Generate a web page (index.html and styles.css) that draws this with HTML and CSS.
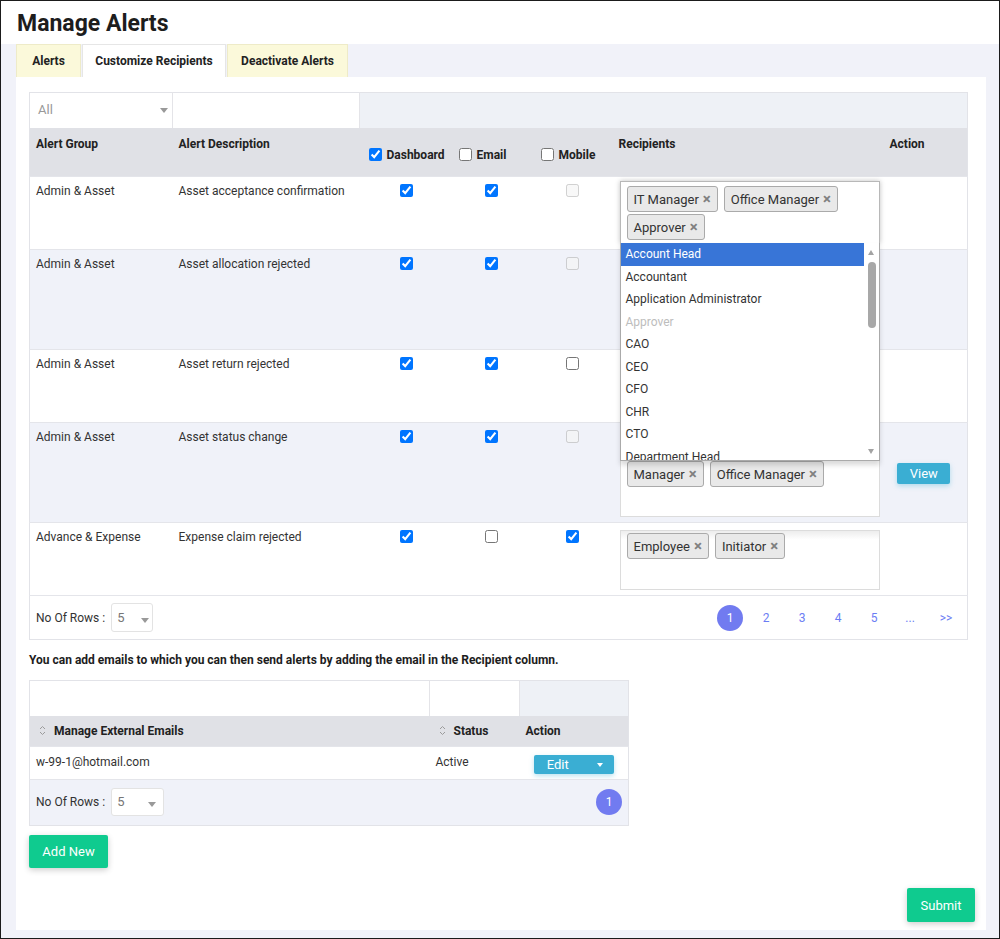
FILE: index.html
```html
<!DOCTYPE html>
<html lang="en">
<head>
    <meta charset="UTF-8">
    <meta name="viewport" content="width=device-width, initial-scale=1.0">
    <title>Manage Alerts</title>
    <link rel="stylesheet" href="styles.css">
</head>
<body>
<div class="page">
    <h1 class="title">Manage Alerts</h1>
    <ul class="tabs">
        <li class="tab t1">Alerts</li>
        <li class="tab t2 active">Customize Recipients</li>
        <li class="tab t3">Deactivate Alerts</li>
    </ul>

    <div class="panel">
        <table class="grid alerts">
            <colgroup>
                <col style="width:143px"><col style="width:187px"><col style="width:93px"><col style="width:78px">
                <col style="width:83px"><col style="width:271px"><col style="width:83px">
            </colgroup>
            <thead>
                <tr class="filter-row">
                    <td class="filter-cell"><div class="fake-select">All<span class="caret"></span></div></td>
                    <td class="filter-cell"></td>
                    <td class="filter-empty" colspan="5"></td>
                </tr>
                <tr class="head-row">
                    <th>Alert Group</th>
                    <th>Alert Description</th>
                    <th class="th-check th-dash"><label><input type="checkbox" checked>Dashboard</label></th>
                    <th class="th-check th-mail"><label><input type="checkbox">Email</label></th>
                    <th class="th-check th-mob"><label><input type="checkbox">Mobile</label></th>
                    <th class="th-rcpt">Recipients</th>
                    <th class="th-act">Action</th>
                </tr>
            </thead>
            <tbody>
                <tr>
                    <td>Admin &amp; Asset</td>
                    <td>Asset acceptance confirmation</td>
                    <td class="chk"><input type="checkbox" checked></td>
                    <td class="chk"><input type="checkbox" checked></td>
                    <td class="chk"><input type="checkbox" disabled></td>
                    <td class="rcpt-cell">
                        <div class="rcpt open">
                            <span class="tag">IT Manager<i class="x">×</i></span>
                            <span class="tag">Office Manager<i class="x">×</i></span>
                            <span class="tag">Approver<i class="x">×</i></span>
                            <span class="rcpt-input inline"></span>
                            <div class="dropdown">
                                <ul class="dd-list">
                                    <li class="hl">Account Head</li>
                                    <li>Accountant</li>
                                    <li>Application Administrator</li>
                                    <li class="off">Approver</li>
                                    <li>CAO</li>
                                    <li>CEO</li>
                                    <li>CFO</li>
                                    <li>CHR</li>
                                    <li>CTO</li>
                                    <li>Department Head</li>
                                    <li>Employee</li>
                                </ul>
                                <div class="dd-scroll">
                                    <span class="arr up"></span>
                                    <span class="thumb"></span>
                                    <span class="arr down"></span>
                                </div>
                            </div>
                        </div>
                    </td>
                    <td class="act"></td>
                </tr>
                <tr class="alt">
                    <td>Admin &amp; Asset</td>
                    <td>Asset allocation rejected</td>
                    <td class="chk"><input type="checkbox" checked></td>
                    <td class="chk"><input type="checkbox" checked></td>
                    <td class="chk"><input type="checkbox" disabled></td>
                    <td class="rcpt-cell">
                        <div class="rcpt">
                            <span class="tag">Department Head<i class="x">×</i></span>
                            <span class="tag">HR Manager<i class="x">×</i></span>
                            <span class="tag">Initiator<i class="x">×</i></span>
                            <span class="rcpt-input"></span>
                        </div>
                    </td>
                    <td class="act"></td>
                </tr>
                <tr>
                    <td>Admin &amp; Asset</td>
                    <td>Asset return rejected</td>
                    <td class="chk"><input type="checkbox" checked></td>
                    <td class="chk"><input type="checkbox" checked></td>
                    <td class="chk"><input type="checkbox"></td>
                    <td class="rcpt-cell">
                        <div class="rcpt one">
                            <span class="tag">Initiator<i class="x">×</i></span>
                            <span class="rcpt-input"></span>
                        </div>
                    </td>
                    <td class="act"></td>
                </tr>
                <tr class="alt">
                    <td>Admin &amp; Asset</td>
                    <td>Asset status change</td>
                    <td class="chk"><input type="checkbox" checked></td>
                    <td class="chk"><input type="checkbox" checked></td>
                    <td class="chk"><input type="checkbox" disabled></td>
                    <td class="rcpt-cell">
                        <div class="rcpt">
                            <span class="tag">Department Head<i class="x">×</i></span>
                            <span class="tag">HR Manager<i class="x">×</i></span>
                            <span class="tag">Manager<i class="x">×</i></span>
                            <span class="tag">Office Manager<i class="x">×</i></span>
                            <span class="rcpt-input"></span>
                        </div>
                    </td>
                    <td class="act"><button class="btn-view">View</button></td>
                </tr>
                <tr>
                    <td>Advance &amp; Expense</td>
                    <td>Expense claim rejected</td>
                    <td class="chk"><input type="checkbox" checked></td>
                    <td class="chk"><input type="checkbox"></td>
                    <td class="chk"><input type="checkbox" checked></td>
                    <td class="rcpt-cell">
                        <div class="rcpt one">
                            <span class="tag">Employee<i class="x">×</i></span>
                            <span class="tag">Initiator<i class="x">×</i></span>
                            <span class="rcpt-input"></span>
                        </div>
                    </td>
                    <td class="act"></td>
                </tr>
            </tbody>
            <tfoot>
                <tr class="foot-row">
                    <td colspan="7">
                        <div class="foot-bar">
                            <span class="rows-label">No Of Rows :</span>
                            <div class="fake-select small">5<span class="caret"></span></div>
                            <ul class="pager">
                                <li class="cur">1</li>
                                <li>2</li>
                                <li>3</li>
                                <li>4</li>
                                <li>5</li>
                                <li>...</li>
                                <li>&gt;&gt;</li>
                            </ul>
                        </div>
                    </td>
                </tr>
            </tfoot>
        </table>

        <p class="note">You can add emails to which you can then send alerts by adding the email in the Recipient column.</p>

        <table class="grid emails">
            <colgroup>
                <col style="width:400px"><col style="width:90px"><col style="width:109px">
            </colgroup>
            <thead>
                <tr class="filter-row">
                    <td class="filter-cell"></td>
                    <td class="filter-cell"></td>
                    <td class="filter-empty"></td>
                </tr>
                <tr class="head-row">
                    <th class="sortable"><svg class="sort" width="7" height="11" viewBox="0 0 7 11"><path d="M1 4L3.5 1.5L6 4M1 7L3.5 9.5L6 7" fill="none" stroke="#9b9b9b" stroke-width="1"/></svg>Manage External Emails</th>
                    <th class="sortable"><svg class="sort" width="7" height="11" viewBox="0 0 7 11"><path d="M1 4L3.5 1.5L6 4M1 7L3.5 9.5L6 7" fill="none" stroke="#9b9b9b" stroke-width="1"/></svg>Status</th>
                    <th>Action</th>
                </tr>
            </thead>
            <tbody>
                <tr>
                    <td>w-99-1@hotmail.com</td>
                    <td class="status">Active</td>
                    <td class="act"><button class="btn-edit"><span>Edit</span><span class="edit-caret"></span></button></td>
                </tr>
            </tbody>
            <tfoot>
                <tr class="foot-row alt-foot">
                    <td colspan="3">
                        <div class="foot-bar">
                            <span class="rows-label">No Of Rows :</span>
                            <div class="fake-select wide">5<span class="caret"></span></div>
                            <ul class="pager">
                                <li class="cur">1</li>
                            </ul>
                        </div>
                    </td>
                </tr>
            </tfoot>
        </table>

        <button class="btn-green add">Add New</button>

        <div class="submit-row">
            <button class="btn-green">Submit</button>
        </div>
    </div>
</div>
</body>
</html>
```

FILE: styles.css
```css
* {
    box-sizing: border-box;
}
body {
    margin: 0;
    font-family: Roboto, "Liberation Sans", Arial, sans-serif;
    color: #333;
    background: #fff;
}
.page {
    width: 1000px;
    height: 939px;
    border: 1px solid #1b1b1b;
    background: #f1f2f9;
    overflow: hidden;
}
.title {
    margin: 0;
    padding: 10px 16px 0;
    height: 43px;
    background: #fff;
    font-size: 23px;
    line-height: 26px;
    font-weight: 700;
    color: #1d1d1d;
}
.tabs {
    list-style: none;
    margin: 0;
    padding: 0 0 0 15px;
    display: flex;
    height: 33px;
}
.tab {
    height: 33px;
    margin-right: 1px;
    background: #fbf9da;
    border: 1px solid #eeebc8;
    border-bottom: none;
    font-size: 12px;
    font-weight: 700;
    color: #222;
    text-align: center;
    line-height: 32px;
}
.t1 { width: 65px; }
.t2 { width: 144px; }
.t3 { width: 121px; }
.tab.active {
    background: #fff;
    border-color: #e6e6e6;
}

/* main white panel */
.panel {
    display: flex;
    flex-direction: column;
    align-items: flex-start;
    margin-left: 15px;
    width: 970px;
    height: 853px;
    background: #fff;
    padding: 15px 18px 8px 13px;
}

.grid {
    flex: none;
    border-collapse: collapse;
    table-layout: fixed;
    font-size: 12px;
    border: 1px solid #e2e3e8;
}
.alerts { width: 938px; }
.emails { width: 599px; }

.grid td, .grid th {
    padding: 7px 6px 5px;
    vertical-align: top;
    text-align: left;
    line-height: 14px;
}
.grid tbody td {
    border-top: 1px solid #e4e5ea;
}
.grid tbody tr.alt td {
    background: #f0f2f9;
}

.filter-row td {
    height: 35px;
    padding: 0;
    vertical-align: middle;
}
.filter-cell {
    background: #fff;
    border-right: 1px solid #e4e4e8;
}
.filter-empty {
    background: #eef1f6;
}
.fake-select {
    position: relative;
    color: #999;
    font-size: 13px;
    padding-left: 8px;
}
.caret {
    position: absolute;
    width: 0;
    height: 0;
    border-left: 4px solid transparent;
    border-right: 4px solid transparent;
    border-top: 5px solid #999;
    top: 50%;
    margin-top: -2px;
}
.filter-row .caret {
    right: 4px;
}

.head-row th {
    background: #e0e1e6;
    font-weight: 700;
    color: #222;
    padding-top: 9px;
    height: 49px;
}
.th-check {
    padding-top: 20px !important;
}
.th-check label {
    display: flex;
    align-items: center;
    gap: 5px;
}
.th-check input {
    margin: 0;
}
.th-dash { padding-left: 9px !important; }
.th-mail { padding-left: 6px !important; }
.th-mob { padding-left: 10px !important; }
.th-rcpt { padding-left: 5px !important; }
.th-act { padding-left: 5px !important; }

.chk {
    text-align: center !important;
}
.chk input {
    display: block;
    margin: 0 auto;
}

/* recipient picker */
.rcpt-cell {
    padding: 7px 5px 5px 6px !important;
}
.rcpt {
    position: relative;
    display: flex;
    flex-wrap: wrap;
    align-content: flex-start;
    width: 260px;
    padding: 2px 2px 1px 6px;
    border: 1px solid #dcdcdc;
    background: linear-gradient(#eee 1%, #fff 15%);
}
.rcpt.one {
    padding-bottom: 2px;
}
.rcpt.open {
    margin-top: -3px;
    padding-top: 4px;
    border-color: #b8b8b8;
    background: #fff;
    box-shadow: 0 0 5px rgba(0, 0, 0, 0.25);
}
.tag {
    display: inline-block;
    height: 26px;
    line-height: 24px;
    padding: 0 6px;
    margin: 0 6px 2px 0;
    font-size: 13px;
    color: #333;
    background: #e9e9e9;
    border: 1px solid #aaa;
    border-radius: 3px;
    white-space: nowrap;
}
.tag .x {
    font-style: normal;
    font-weight: 700;
    color: #808080;
    margin-left: 4px;
    font-size: 15px;
}
.rcpt-input {
    flex-basis: 100%;
    height: 26px;
}
.rcpt-input.inline {
    flex: 1;
    flex-basis: auto;
    min-width: 30px;
}
.dropdown {
    position: absolute;
    z-index: 10;
    left: -1px;
    top: 100%;
    width: 260px;
    height: 218px;
    background: #fff;
    border: 1px solid #aaa;
    border-top: none;
    box-shadow: 0 4px 5px rgba(0, 0, 0, 0.15);
    overflow: hidden;
}
.dd-list {
    list-style: none;
    margin: 0;
    padding: 0;
    width: 243px;
}
.dd-list li {
    height: 22.5px;
    line-height: 22.5px;
    padding-left: 5px;
    font-size: 12px;
    color: #333;
    white-space: nowrap;
}
.dd-list li.hl {
    background: #3875d7;
    color: #fff;
}
.dd-list li.off {
    color: #bdbdbd;
}
.dd-scroll {
    position: absolute;
    top: 0;
    right: 0;
    bottom: 0;
    width: 15px;
    background: #fff;
}
.arr {
    position: absolute;
    left: 4px;
    width: 0;
    height: 0;
    border-left: 3.5px solid transparent;
    border-right: 3.5px solid transparent;
}
.arr.up {
    top: 7px;
    border-bottom: 5px solid #a3a3a3;
}
.arr.down {
    bottom: 6px;
    border-top: 5px solid #a3a3a3;
}
.thumb {
    position: absolute;
    left: 4px;
    top: 19px;
    width: 8px;
    height: 66px;
    border-radius: 4px;
    background: #a8a8a8;
}

.act {
    vertical-align: middle !important;
    text-align: center !important;
}
.btn-view {
    width: 53px;
    height: 21px;
    border: none;
    border-radius: 2px;
    background: #3aaed3;
    color: #fff;
    font-family: inherit;
    font-size: 13px;
    box-shadow: 0 2px 5px rgba(58, 174, 211, 0.35);
    margin-right: 4px;
}

/* footer with rows and pages */
.foot-row td {
    border-top: 1px solid #e4e5ea;
    padding: 7px 3px 7px 6px;
}
.foot-bar {
    display: flex;
    align-items: center;
}
.rows-label {
    margin-right: 6px;
}
.fake-select.small,
.fake-select.wide {
    width: 42px;
    height: 29px;
    line-height: 27px;
    border: 1px solid #e3e3e3;
    border-radius: 3px;
    background: #fff;
    padding-left: 5px;
    color: #777;
}
.fake-select.wide {
    width: 53px;
    height: 28px;
    line-height: 26px;
}
.fake-select.small .caret { right: 3px; margin-top: 0; }
.fake-select.wide .caret { right: 7px; margin-top: 0; }
.pager {
    list-style: none;
    margin: 0 0 0 auto;
    padding: 0;
    display: flex;
}
.pager li {
    width: 36px;
    text-align: center;
    color: #6b7df4;
    font-size: 12px;
    line-height: 26px;
}
.pager li.cur {
    position: relative;
    isolation: isolate;
    color: #fff;
}
.pager li.cur::before {
    content: "";
    position: absolute;
    left: 5px;
    top: 0;
    width: 26px;
    height: 26px;
    border-radius: 50%;
    background: #717bf0;
    z-index: -1;
}

.note {
    margin: 12px 0 12px;
    font-size: 12px;
    font-weight: 700;
    color: #1d1d1d;
    line-height: 16px;
}

/* external emails */
.emails .head-row th {
    height: 31px;
    padding-top: 8px;
}
.sortable {
    padding-left: 9px !important;
}
.sort {
    vertical-align: -1px;
    margin-right: 8px;
}
.emails tbody td {
    height: 33px;
    padding-top: 8px;
}
.status {
    padding-left: 6px !important;
}
.btn-edit {
    display: flex;
    align-items: center;
    width: 80px;
    height: 19px;
    margin: 0 auto;
    padding: 0 13px;
    border: none;
    border-radius: 2px;
    background: #3aaed3;
    color: #fff;
    font-family: inherit;
    font-size: 13px;
    box-shadow: 0 2px 5px rgba(58, 174, 211, 0.35);
}
.edit-caret {
    margin-left: auto;
    width: 0;
    height: 0;
    border-left: 3px solid transparent;
    border-right: 3px solid transparent;
    border-top: 4px solid #fff;
    margin-right: -2px;
}
.alt-foot td {
    background: #f0f2f9;
    padding: 8px 6px 8px 6px;
    height: 46px;
}
.alt-foot .pager li {
    width: 26px;
}
.alt-foot .pager li.cur::before {
    left: 0;
}

.btn-green {
    height: 33px;
    padding: 0 13px;
    border: none;
    border-radius: 2px;
    background: #0fcb8f;
    color: #fff;
    font-family: inherit;
    font-size: 13px;
    box-shadow: 0 2px 6px rgba(0, 0, 0, 0.2);
}
.add {
    display: block;
    margin-top: 9px;
    width: 79px;
}
.submit-row {
    align-self: stretch;
    display: flex;
    justify-content: flex-end;
    margin: auto -7px 0 0;
}
.submit-row .btn-green {
    width: 68px;
    height: 34px;
}
```
